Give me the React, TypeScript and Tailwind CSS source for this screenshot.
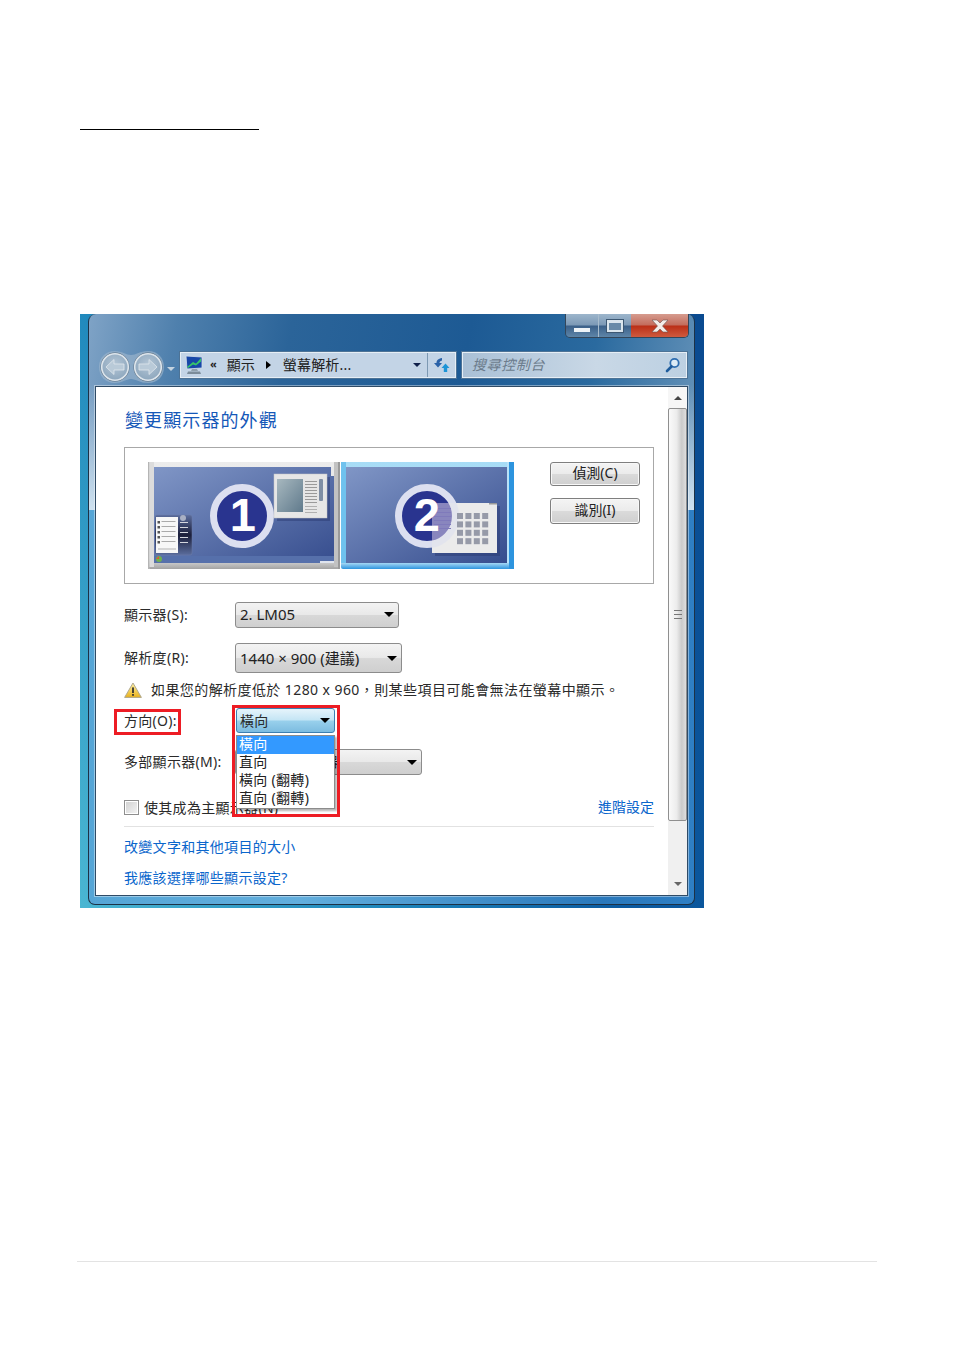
import React from "react";

const font = "font-['Noto_Sans','Noto_Sans_CJK_TC',sans-serif]";
const btn =
  "flex items-center justify-center pb-[3px] w-[90px] rounded-[3px] border border-[#7f7f7f] text-[14px] tracking-normal text-[#222] bg-[linear-gradient(180deg,#f4f4f4_0%,#ebebeb_48%,#dadada_52%,#cfcfcf_100%)] shadow-[inset_0_0_0_1px_#f8f8f8]";

function Arrow() {
  return <span className="w-0 h-0 border-x-[5px] border-x-transparent border-t-[5px] border-t-black" />;
}

function Select({ className, text }: { className: string; text: string }) {
  return (
    <div className={"flex items-center justify-between rounded-[3px] border border-[#8c8c8c] bg-[linear-gradient(180deg,#f3f3f3_0%,#e9e9e9_48%,#d8d8d8_52%,#cfcfcf_100%)] pl-[4px] pr-[4px] text-[#222] tracking-normal " + className}>
      <span className="leading-none">{text}</span>
      <Arrow />
    </div>
  );
}

function NavButtons() {
  return (
    <svg width="80" height="34" viewBox="0 0 80 34" className="shrink-0">
      <defs>
        <radialGradient id="navb" cx="50%" cy="40%" r="65%">
          <stop offset="0" stopColor="#b4c6d6" />
          <stop offset="1" stopColor="#8aa4bb" />
        </radialGradient>
      </defs>
      <path d="M17 1 C24 1 28 5 33 5 C38 5 42 1 50 1 C60 1 66 8 66 17 C66 26 60 33 50 33 C42 33 38 29 33 29 C28 29 24 33 17 33 C7 33 1 26 1 17 C1 8 7 1 17 1Z" fill="#9db6cd" opacity="0.65" />
      <circle cx="17" cy="17" r="14.5" fill="#5a6d7e" />
      <circle cx="17" cy="17" r="13.3" fill="url(#navb)" stroke="#dde5ec" strokeWidth="1.6" />
      <circle cx="50" cy="17" r="14.5" fill="#5a6d7e" />
      <circle cx="50" cy="17" r="13.3" fill="url(#navb)" stroke="#dde5ec" strokeWidth="1.6" />
      <path d="M8 17 L16 9.5 V14 H26 V20 H16 V24.5 Z" fill="#b9cad8" stroke="#dfe7ee" strokeWidth="0.8" strokeLinejoin="round" />
      <path d="M59 17 L51 9.5 V14 H41 V20 H51 V24.5 Z" fill="#b9cad8" stroke="#dfe7ee" strokeWidth="0.8" strokeLinejoin="round" />
      <path d="M69 17 H77 L73 21 Z" fill="#c4d3e0" />
    </svg>
  );
}

function MonitorIcon() {
  return (
    <svg width="18" height="20" viewBox="0 0 18 20" className="shrink-0">
      <path d="M1 1 L17 2 V13 L2 14 Z" fill="#1747a8" stroke="#d5e0ea" strokeWidth="0.8" />
      <path d="M2 12 L8 7 L11 8.5 L16 3 V6.5 L11 10.5 L8 9.5 L3 13 Z" fill="#36c46a" />
      <path d="M7 14 H12 L13 16 H6 Z" fill="#8fa0ad" />
      <path d="M3 16.5 H15 L16 19 H2 Z" fill="#7b8c9a" />
    </svg>
  );
}

function Refresh() {
  return (
    <svg width="17" height="16" viewBox="0 0 17 16">
      <path d="M9 1 C5 1.5 3.5 3.5 3.5 6 H1 L5 10.5 L9 6 H6.5 C6.5 5 7.2 4 9 3.5 Z" fill="#2a62a8" />
      <path d="M12.5 6.5 L8.5 11 H10.8 V15 H14.2 V11 H16.5 Z" fill="#1c94d6" />
    </svg>
  );
}

function SearchIcon() {
  return (
    <svg width="16" height="16" viewBox="0 0 16 16">
      <circle cx="9.5" cy="6" r="4.2" fill="#dcebf6" stroke="#2e6db0" strokeWidth="1.8" />
      <path d="M6.5 9.5 L2 14" stroke="#1f5c9c" strokeWidth="2.6" strokeLinecap="round" />
    </svg>
  );
}

function Warning() {
  return (
    <svg width="18" height="16" viewBox="0 0 18 16" className="shrink-0">
      <defs>
        <linearGradient id="warn" x1="0" y1="0" x2="0" y2="1">
          <stop offset="0" stopColor="#fff2a8" />
          <stop offset="1" stopColor="#e9b21c" />
        </linearGradient>
      </defs>
      <path d="M9 1 L17.4 15.4 H0.6 Z" fill="url(#warn)" stroke="#a9a38a" strokeWidth="0.9" strokeLinejoin="round" />
      <rect x="8.1" y="5.4" width="1.8" height="5.6" fill="#333" />
      <rect x="8.1" y="12" width="1.8" height="1.8" fill="#333" />
    </svg>
  );
}

const digit = { fontFamily: "'Liberation Sans', sans-serif", fontWeight: 700, fontSize: 47 };

function MonitorOne() {
  const lines = [20, 23, 26, 29, 32, 35, 38, 41];
  return (
    <svg width="192" height="108" viewBox="0 0 192 108" className="shrink-0">
      <defs>
        <linearGradient id="frame1" x1="0" y1="0" x2="0" y2="1">
          <stop offset="0" stopColor="#ececec" />
          <stop offset="0.9" stopColor="#e4e4e4" />
          <stop offset="1" stopColor="#a3a3a3" />
        </linearGradient>
        <linearGradient id="scr1" x1="0" y1="0" x2="1" y2="1">
          <stop offset="0" stopColor="#8096c6" />
          <stop offset="1" stopColor="#364d8e" />
        </linearGradient>
        <linearGradient id="prev" x1="0" y1="0" x2="1" y2="1">
          <stop offset="0" stopColor="#a7b8bf" />
          <stop offset="1" stopColor="#607a8c" />
        </linearGradient>
        <linearGradient id="start" x1="0" y1="0" x2="0" y2="1">
          <stop offset="0" stopColor="#5a6c9c" />
          <stop offset="0.5" stopColor="#1b1e3a" />
          <stop offset="1" stopColor="#5a6c9c" />
        </linearGradient>
      </defs>
      <rect x="0" y="1" width="192" height="107" rx="2" fill="url(#frame1)" />
      <rect x="0" y="1" width="1.5" height="107" fill="#b5b5b5" />
      <rect x="1.5" y="1" width="4.5" height="105" fill="#dcdcdc" />
      <rect x="186" y="1" width="4" height="105" fill="#c2c2c2" />
      <rect x="190" y="1" width="2" height="107" fill="#9a9a9a" />
      <rect x="6" y="6" width="180" height="96" fill="url(#scr1)" />
      <circle cx="94" cy="55" r="28.5" fill="#29348f" stroke="#dcdff0" strokeWidth="7" />
      <text x="95" y="69.5" textAnchor="middle" fill="#fff" style={digit}>1</text>
      <rect x="6" y="95" width="180" height="7" fill="#5670ab" />
      <rect x="183" y="6" width="3" height="9" fill="#e9e9e9" />
      <rect x="172" y="100" width="14" height="2" fill="#dfe4ee" />
      <circle cx="11" cy="98" r="3" fill="#6fb04f" />
      <path d="M8 98 H11 V95 Z" fill="#d9573a" />
      <rect x="129" y="16" width="53" height="44" fill="#27386f" opacity="0.45" />
      <rect x="126" y="13" width="53" height="44" fill="#e6e6e6" stroke="#c6c6c6" strokeWidth="0.5" />
      <rect x="129" y="18" width="26" height="33" fill="url(#prev)" />
      {lines.map((y) => (
        <rect key={y} x="157" y={y} width="12" height="1" fill="#9a9a9a" />
      ))}
      {[45, 48, 51].map((y) => (
        <rect key={y} x="157" y={y} width="12" height="1" fill="#b0b0b0" />
      ))}
      <rect x="171" y="18" width="4" height="22" rx="1" fill="#7f8ea4" />
      <rect x="7" y="54" width="37" height="40" rx="2" fill="url(#start)" stroke="#6d7fa8" strokeWidth="0.5" />
      <rect x="8" y="56" width="22" height="36" fill="#f7f7f7" />
      {[60, 65, 70, 75, 80].map((y) => (
        <g key={y}>
          <rect x="9.5" y={y} width="2.5" height="2.5" fill="#555" />
          <rect x="13.5" y={y} width="14" height="1" fill="#aaa" />
          <rect x="32" y={y + 1} width="8" height="1" fill="#d4d6de" />
        </g>
      ))}
      <rect x="10" y="87" width="18" height="2" fill="#d5d5d5" />
      <circle cx="35" cy="57" r="3" fill="#a9b0c4" />
    </svg>
  );
}

function MonitorTwo() {
  const cells = [0, 1, 2, 3];
  return (
    <svg width="173" height="108" viewBox="0 0 173 108" className="shrink-0">
      <defs>
        <linearGradient id="frame2" x1="0" y1="0" x2="0" y2="1">
          <stop offset="0" stopColor="#a7dcf6" />
          <stop offset="0.93" stopColor="#c3e8fa" />
          <stop offset="1" stopColor="#2d94de" />
        </linearGradient>
        <linearGradient id="scr2" x1="0" y1="0" x2="1" y2="1">
          <stop offset="0" stopColor="#8096c6" />
          <stop offset="1" stopColor="#364d8e" />
        </linearGradient>
        <clipPath id="win2">
          <rect x="91" y="42" width="65" height="50" />
        </clipPath>
      </defs>
      <rect x="0" y="1" width="173" height="107" rx="2" fill="url(#frame2)" />
      <rect x="0" y="1" width="5" height="101" fill="#6fc2ee" />
      <rect x="166" y="1" width="2" height="101" fill="#b9e2f8" />
      <rect x="168" y="1" width="5" height="107" fill="#2d94de" />
      <rect x="5" y="6" width="161" height="96" fill="url(#scr2)" />
      <circle cx="86" cy="55" r="28.5" fill="#29348f" stroke="#dcdff0" strokeWidth="7" />
      <rect x="94" y="45" width="65" height="50" fill="#27386f" opacity="0.45" />
      <rect x="91" y="42" width="65" height="50" fill="#ebebeb" />
      <g clipPath="url(#win2)">
        <circle cx="86" cy="55" r="28.5" fill="#3a349a" opacity="0.55" stroke="#dcdff0" strokeWidth="7" />
      </g>
      {[47, 51, 55, 59, 63, 67].map((y) => (
        <rect key={y} x="93" y={y} width="17" height="1" fill="#7f7abb" />
      ))}
      <text x="86" y="69.5" textAnchor="middle" fill="#fff" style={digit}>2</text>
      {cells.map((r) =>
        cells.map((c) => <rect key={`${r}${c}`} x={116 + c * 8.4} y={52 + r * 8.4} width="6" height="6" fill="#969aa8" />)
      )}
      <rect x="148" y="42" width="8" height="1.5" fill="#999" />
    </svg>
  );
}

export default function App() {
  return (
    <div className={`w-[954px] h-[1350px] bg-white pt-[129px] flex flex-col ${font}`}>
      <div className="ml-[80px] w-[179px] h-px bg-black" />

      <div className="relative ml-[80px] mt-[184px] w-[624px] h-[594px] pl-[8px] pr-[9px] pb-[3px] bg-[linear-gradient(65deg,#4ab6d2_0%,#1c84ba_35%,#0b5aa0_60%,#0a4a90_100%)]">
        <div className="h-full w-full rounded-t-[8px] rounded-b-[7px] border-b border-x border-[#1d3246] bg-no-repeat bg-[size:100%_196px,100%_196px,100%_100%] bg-[linear-gradient(180deg,#0000_36%,#cfe2f0_100%),linear-gradient(100deg,#7fa3c6_0%,#4f80ad_14%,#2b6499_32%,#1d5a94_60%,#2a6a9f_80%,#6a96bb_100%),linear-gradient(90deg,#55a5d6_0%,#62aedd_35%,#2a78bb_85%,#2f7fc4_100%)]">
          <div className="h-[24px] flex justify-end pr-[5px]">
            <div className="flex h-[24px] rounded-b-[5px] border border-t-0 border-[#33465a] overflow-hidden">
              <div className="w-[33px] flex items-end justify-center pb-[5px] border-r border-[#a8bccd] bg-[linear-gradient(180deg,#9db6cc_0%,#7c99b6_48%,#3b6089_52%,#5e85a8_100%)]">
                <span className="w-[16px] h-[4px] bg-[#eef3f7]" />
              </div>
              <div className="w-[32px] flex items-center justify-center bg-[linear-gradient(180deg,#9db6cc_0%,#7c99b6_48%,#3b6089_52%,#5e85a8_100%)]">
                <span className="w-[16px] h-[12px] border-x-2 border-b-2 border-t-[3px] border-[#dbe5ed] bg-[#6a8aa8] shadow-[0_0_0_1px_#3d5873]" />
              </div>
              <div className="w-[57px] flex items-center justify-center bg-[linear-gradient(180deg,#d69c8f_0%,#c36c5c_48%,#bb2f17_52%,#cf5a3e_100%)]">
                <svg width="18" height="14" viewBox="0 0 18 14">
                  <path d="M1 1 H6 L9 4 L12 1 H17 L11.5 7 L17 13 H12 L9 10 L6 13 H1 L6.5 7 Z" fill="#f3ece8" stroke="#6f5650" strokeWidth="0.6" />
                </svg>
              </div>
            </div>
          </div>

          <div className="mt-[12px] h-[32px] flex items-start pl-[9px]">
            <NavButtons />
            <div className="ml-[2px] mt-[2px] w-[276px] h-[26px] flex items-center border border-[#e6eef5] outline outline-[#4d7396] bg-[#c3d4e6] text-[14px] text-[#222]">
              <div className="flex items-center flex-1 pl-[4px]">
                <MonitorIcon />
                <span className="ml-[7px] pb-[2px] text-[11px] font-bold">«</span>
                <span className="ml-[10px] pb-[2px]">顯示</span>
                <span className="ml-[11px] w-0 h-0 border-y-[4px] border-y-transparent border-l-[5px] border-l-black" />
                <span className="ml-[12px] pb-[2px] tracking-[0.2px]">螢幕解析...</span>
                <span className="ml-auto mr-[6px]">
                  <span className="block w-0 h-0 border-x-[4px] border-x-transparent border-t-[4px] border-t-[#10204a]" />
                </span>
              </div>
              <div className="w-[28px] h-full flex items-center justify-center border-l border-[#7d99b3]">
                <Refresh />
              </div>
            </div>
            <div className="ml-[6px] mt-[2px] w-[225px] h-[26px] flex items-center justify-between pl-[9px] pr-[5px] border border-[#e6eef5] outline outline-[#4d7396] bg-[linear-gradient(90deg,#a9c0d6_0%,#c9d8e6_60%,#bcd0e2_100%)] text-[14px] tracking-[0.6px] italic text-[#6c7c8c]">
              <span className="pb-[2px]">搜尋控制台</span>
              <SearchIcon />
            </div>
          </div>

          <div className="relative mt-[4px] mx-[6px] h-[510px] flex bg-white border border-[#2f4b66] shadow-[0_0_0_1px_rgba(255,255,255,0.4)]">
            <div className="flex-1 pl-[28px] pr-[14px] pt-[21px] text-[14px] tracking-[0.3px] text-[#2a2a2a]">
              <h1 className="pl-px text-[18px] leading-[24px] tracking-[1.1px] font-normal text-[#1558b8]">變更顯示器的外觀</h1>

              <div className="mt-[15px] h-[137px] flex border border-[#a8a8a8] pt-[13px] pl-[23px]">
                <MonitorOne />
                <div className="ml-px">
                  <MonitorTwo />
                </div>
                <div className="ml-[36px] pt-px flex flex-col gap-[12px]">
                  <div className={`${btn} h-[24px]`}>偵測(C)</div>
                  <div className={`${btn} h-[26px]`}>識別(I)</div>
                </div>
              </div>

              <div className="mt-[18px] flex items-center">
                <span className="w-[111px] pb-[2px]">顯示器(S):</span>
                <Select className="w-[164px] h-[26px] text-[15px] pb-[2px]" text="2. LM05" />
              </div>
              <div className="mt-[15px] flex items-center">
                <span className="w-[111px] pb-[2px]">解析度(R):</span>
                <Select className="w-[167px] h-[30px] text-[15px]" text="1440 × 900 (建議)" />
              </div>
              <div className="mt-[7px] h-[20px] flex items-center">
                <Warning />
                <span className="ml-[9px] pb-[2px] tracking-[0.42px] whitespace-nowrap">如果您的解析度低於 1280 x 960，則某些項目可能會無法在螢幕中顯示。</span>
              </div>
              <div className="mt-[8px] flex items-center">
                <span className="w-[112px]">方向(O):</span>
                <div className="w-[99px] h-[25px] flex items-center justify-between rounded-[3px] border border-[#3c7fb1] bg-[linear-gradient(180deg,#e6f4fb_0%,#c4e5f5_48%,#98d0ec_52%,#7dbce0_100%)] pl-[3px] pr-[4px]">
                  <span>橫向</span>
                  <Arrow />
                </div>
              </div>
              <div className="mt-[16px] flex items-center">
                <span className="w-[111px] pb-[2px]">多部顯示器(M):</span>
                <Select className="w-[187px] h-[26px]" text="延伸這些顯示器" />
              </div>
              <div className="mt-[22px] h-[20px] flex items-center justify-between">
                <div className="flex items-center">
                  <span className="w-[15px] h-[15px] border border-[#8e8e8e] bg-[linear-gradient(135deg,#d0d0d0,#f4f4f4)] shadow-[inset_0_0_0_1px_#fff]" />
                  <span className="ml-[5px]">使其成為主顯示器(N)</span>
                </div>
                <span className="pb-[2px] tracking-normal text-[#0a66cc]">進階設定</span>
              </div>
              <div className="mt-[9px] h-px bg-[#e2e2e2]" />
              <p className="mt-[10px] h-[20px] leading-[20px] text-[#0a66cc]">改變文字和其他項目的大小</p>
              <p className="mt-[11px] h-[20px] leading-[20px] text-[#0a66cc]">我應該選擇哪些顯示設定?</p>
            </div>

            <div className="w-[19px] flex flex-col bg-[#f0f0f0]">
              <div className="h-[21px] flex items-center justify-center bg-[#f6f6f6]">
                <span className="w-0 h-0 border-x-[4px] border-x-transparent border-b-[4px] border-b-[#444]" />
              </div>
              <div className="h-[413px] flex items-center justify-center rounded-[2px] border border-[#8f8f8f] bg-[linear-gradient(90deg,#fafafa_0%,#ececec_45%,#cacaca_75%,#dedede_100%)]">
                <span className="w-[8px] h-[9px] border-y border-[#777] bg-[linear-gradient(180deg,transparent_42%,#777_42%,#777_58%,transparent_58%)]" />
              </div>
              <div className="flex-1 flex items-end justify-center pb-[9px]">
                <span className="w-0 h-0 border-x-[4px] border-x-transparent border-t-[4px] border-t-[#666]" />
              </div>
            </div>
          </div>
        </div>

        {/* open list of the orientation box, over the rows below it */}
        <div className="absolute left-[156px] top-[421px] w-[99px] h-[74px] flex flex-col bg-white border border-[#8c8c8c] shadow-[2px_2px_2px_rgba(0,0,0,0.3)] text-[14px] tracking-[0.3px] text-[#222] leading-[16px]">
          <div className="h-[18px] pl-[2px] bg-[#3399ff] text-white">橫向</div>
          <div className="h-[18.5px] pl-[2px]">直向</div>
          <div className="h-[18.5px] pl-[2px]">橫向 (翻轉)</div>
          <div className="h-[18.5px] pl-[2px]">直向 (翻轉)</div>
        </div>
        <div className="absolute left-[34px] top-[395px] w-[67px] h-[26px] border-[3px] border-[#ed1c24]" />
        <div className="absolute left-[152px] top-[391px] w-[108px] h-[112px] border-[3px] border-[#ed1c24]" />
      </div>

      <div className="ml-[77px] mt-[353px] w-[800px] h-px bg-[#e3e3e3]" />
    </div>
  );
}
